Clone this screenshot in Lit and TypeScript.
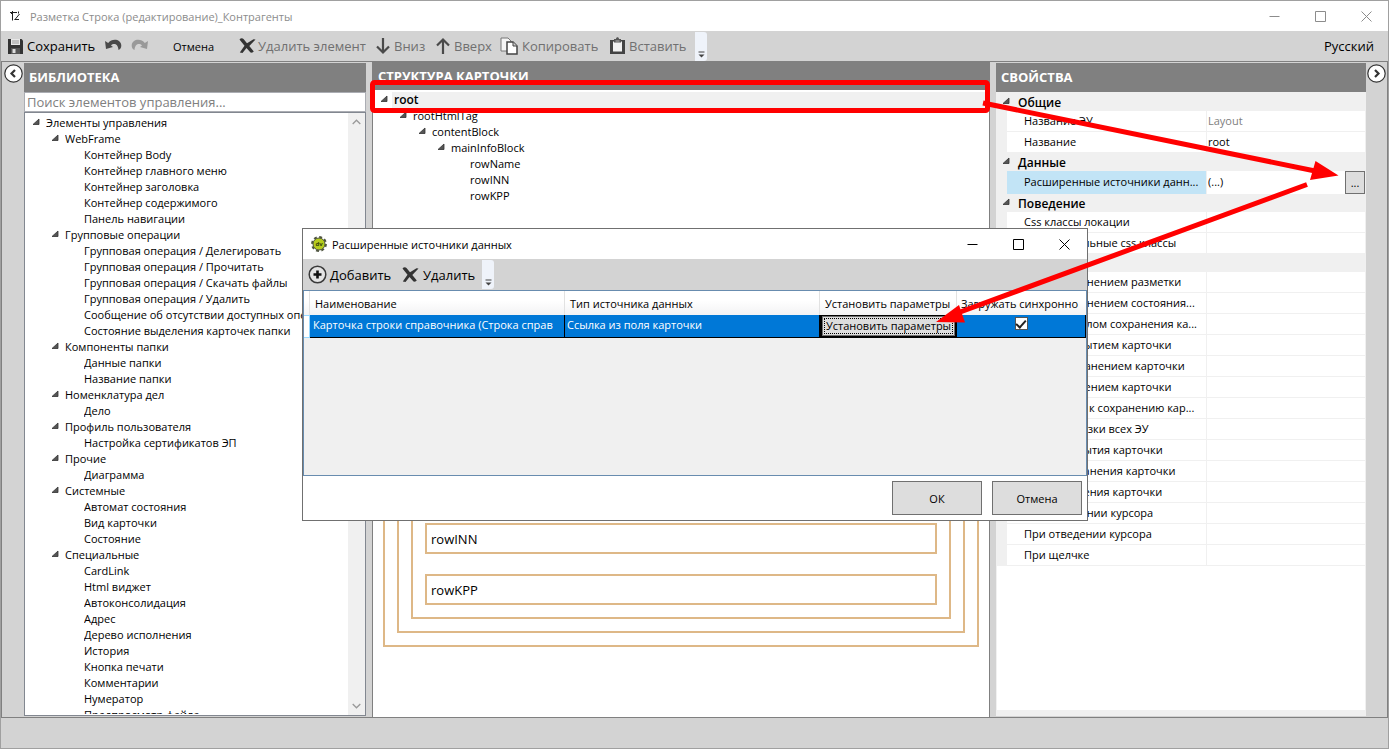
import { LitElement, html, css, svg } from "lit";
import { customElement, property, state } from "lit/decorators.js";
import { classMap } from "lit/directives/class-map.js";

type Node = { label: string; level: number; group?: boolean; root?: boolean };
type Prop = { name?: string; value?: string; category?: string; muted?: boolean; selected?: boolean };

const g = (level: number, label: string): Node => ({ label, level, group: true });
const l = (level: number, label: string): Node => ({ label, level });

const LIBRARY: Node[] = [
  g(0, "Элементы управления"),
  g(1, "WebFrame"),
  l(2, "Контейнер Body"),
  l(2, "Контейнер главного меню"),
  l(2, "Контейнер заголовка"),
  l(2, "Контейнер содержимого"),
  l(2, "Панель навигации"),
  g(1, "Групповые операции"),
  l(2, "Групповая операция / Делегировать"),
  l(2, "Групповая операция / Прочитать"),
  l(2, "Групповая операция / Скачать файлы"),
  l(2, "Групповая операция / Удалить"),
  l(2, "Сообщение об отсутствии доступных операций"),
  l(2, "Состояние выделения карточек папки"),
  g(1, "Компоненты папки"),
  l(2, "Данные папки"),
  l(2, "Название папки"),
  g(1, "Номенклатура дел"),
  l(2, "Дело"),
  g(1, "Профиль пользователя"),
  l(2, "Настройка сертификатов ЭП"),
  g(1, "Прочие"),
  l(2, "Диаграмма"),
  g(1, "Системные"),
  l(2, "Автомат состояния"),
  l(2, "Вид карточки"),
  l(2, "Состояние"),
  g(1, "Специальные"),
  l(2, "CardLink"),
  l(2, "Html виджет"),
  l(2, "Автоконсолидация"),
  l(2, "Адрес"),
  l(2, "Дерево исполнения"),
  l(2, "История"),
  l(2, "Кнопка печати"),
  l(2, "Комментарии"),
  l(2, "Нумератор"),
  l(2, "Предпросмотр файла"),
];

const STRUCTURE: Node[] = [
  { label: "root", level: 0, group: true, root: true },
  g(1, "rootHtmlTag"),
  g(2, "contentBlock"),
  g(3, "mainInfoBlock"),
  l(4, "rowName"),
  l(4, "rowINN"),
  l(4, "rowKPP"),
];

const PROPS: Prop[] = [
  { category: "Общие" },
  { name: "Название ЭУ", value: "Layout", muted: true },
  { name: "Название", value: "root" },
  { category: "Данные" },
  { name: "Расширенные источники данн...", value: "(...)", selected: true },
  { category: "Поведение" },
  { name: "Css классы локации" },
  { name: "Дополнительные css классы" },
  { category: "События" },
  { name: "Перед изменением разметки" },
  { name: "Перед изменением состояния..." },
  { name: "Перед началом сохранения ка..." },
  { name: "Перед закрытием карточки" },
  { name: "Перед сохранением карточки" },
  { name: "Перед удалением карточки" },
  { name: "Подготовка к сохранению кар..." },
  { name: "После загрузки всех ЭУ" },
  { name: "После открытия карточки" },
  { name: "После сохранения карточки" },
  { name: "После удаления карточки" },
  { name: "При наведении курсора" },
  { name: "При отведении курсора" },
  { name: "При щелчке" },
];

const icons = {
  app: svg`<svg width="12" height="12" viewBox="0 0 12 12" fill="none" stroke="#222" stroke-width="1">
    <path d="M0 2.500H7M2.500 1V10.500M4.500 9.500H9M5 9.500L9.500 4M1 4l1.500-1.500M8.500 1.500v2"/></svg>`,
  save: svg`<svg width="17" height="17" viewBox="0 0 17 17"><path d="M1 1h13.500l1.500 1.500V16H1z" fill="#333"/>
    <path d="M4 1h9v6H4z" fill="#e8e8e8"/><path d="M5 3h7M5 5h7" stroke="#999"/><path d="M4 10h9v6H4z" fill="#555"/><path d="M5.500 11h3v4h-3z" fill="#ddd"/></svg>`,
  undo: svg`<svg width="17" height="14" viewBox="0 0 17 14"><path d="M0 2l1 8 7-2-2-1.500C8.500 4 13 4.500 13.500 11c2-1 2.800-2.500 2.800-4.500C16 0 7 -1 3.200 4z" fill="#4a4a4a"/></svg>`,
  redo: svg`<svg width="17" height="14" viewBox="0 0 17 14"><path d="M17 2l-1 8-7-2 2-1.500C8.500 4 4 4.500 3.500 11c-2-1-2.800-2.500-2.800-4.500C1 0 10 -1 13.800 4z" fill="#999"/></svg>`,
  cross: svg`<svg width="18" height="18" viewBox="0 0 18 18"><path d="M0.500 2.500C1.500 1 3.500 .8 4.500 2L8 6.300 14.500 2.200l2 .4L10.300 9l4.500 5.500-1.800 1.300-1.500-.3L7.500 11 3.500 16 .8 15.500 5.500 8.700z" fill="#333"/></svg>`,
  down: svg`<svg width="16" height="18" viewBox="0 0 16 18" fill="none" stroke="#4a4a4a" stroke-width="2.200"><path d="M8 1v15M2 9.500l6 6 6-6"/></svg>`,
  up: svg`<svg width="16" height="18" viewBox="0 0 16 18" fill="none" stroke="#4a4a4a" stroke-width="2.200"><path d="M8 17V2M2 8.500l6-6 6 6"/></svg>`,
  copy: svg`<svg width="19" height="18" viewBox="0 0 19 18"><path d="M1 1h7l3 3v10H1z" fill="#f5f5f5" stroke="#777"/>
    <path d="M7 5h6l4 4v8H7z" fill="#fff" stroke="#444" stroke-width="1.500"/><path d="M13 5v4h4" fill="#ccc" stroke="#444"/></svg>`,
  paste: svg`<svg width="17" height="18" viewBox="0 0 17 18"><path d="M1 3h15v14H1z" fill="#444"/><path d="M4 4.500h9v10H4z" fill="#f2f2f2"/>
    <path d="M5 2h2c0-2.500 3-2.500 3 0h2v3.500H5z" fill="#555"/><path d="M6.500 4h4" stroke="#bbb"/></svg>`,
  plus: svg`<svg width="19" height="19" viewBox="0 0 19 19"><circle cx="9.500" cy="9.500" r="8.300" fill="#e4e4e4" stroke="#3a3a3a" stroke-width="1.500"/>
    <path d="M9.500 5.500v8M5.500 9.500h8" stroke="#111" stroke-width="2.600"/></svg>`,
  gear: svg`<svg width="16" height="16" viewBox="0 0 16 16"><circle cx="8" cy="8" r="6.800" fill="none" stroke="#4f5540" stroke-width="2.200" stroke-dasharray="2.900 2.440"/>
    <circle cx="8" cy="8" r="6" fill="#b6cc1e" stroke="#4f5540"/><text x="8" y="10" text-anchor="middle" font-size="6" font-weight="700" fill="#33400a" font-family="Open Sans, sans-serif">dv</text></svg>`,
  min: svg`<svg width="11" height="11" viewBox="0 0 11 11" fill="none" stroke="currentColor"><path d="M0.500 5.500h10"/></svg>`,
  max: svg`<svg width="11" height="11" viewBox="0 0 11 11" fill="none" stroke="currentColor"><path d="M0.500 0.500h10v10h-10z"/></svg>`,
  close: svg`<svg width="11" height="11" viewBox="0 0 11 11" fill="none" stroke="currentColor"><path d="M0.500 0.500l10 10M10.500 0.500l-10 10"/></svg>`,
  expander: svg`<svg width="8" height="8" viewBox="0 0 8 8"><path d="M7 1v5.500H1z" fill="#555" stroke="#333" stroke-width=".8"/></svg>`,
  left: svg`<svg width="19" height="19" viewBox="0 0 19 19" fill="none"><circle cx="9.500" cy="9.500" r="8.700" fill="#fff" stroke="#333" stroke-width="1.200"/><path d="M11 6l-3.500 3.500L11 13" stroke="#333" stroke-width="2.200"/></svg>`,
  right: svg`<svg width="19" height="19" viewBox="0 0 19 19" fill="none"><circle cx="9.500" cy="9.500" r="8.700" fill="#fff" stroke="#333" stroke-width="1.200"/><path d="M8 6l3.500 3.500L8 13" stroke="#333" stroke-width="2.200"/></svg>`,
  overflow: svg`<svg width="7" height="7" viewBox="0 0 7 7"><path d="M0.500 1h6" stroke="#444"/><path d="M0.500 3.500h6l-3 3z" fill="#444"/></svg>`,
  scrollUp: svg`<svg width="9" height="6" viewBox="0 0 9 6" fill="none" stroke="#999" stroke-width="1.300"><path d="M.7 5l3.800-3.800L8.300 5"/></svg>`,
  scrollDown: svg`<svg width="9" height="6" viewBox="0 0 9 6" fill="none" stroke="#999" stroke-width="1.300"><path d="M.7 1l3.800 3.800L8.300 1"/></svg>`,
};

const base = css`
  * { box-sizing: border-box; }
  svg { display: block; flex: none; }
  button, input { font: inherit; color: inherit; margin: 0; }
  .plain { display: flex; align-items: center; border: 0; padding: 0; background: none; white-space: nowrap; }
  .window-buttons { display: flex; gap: 35px; }
`;

@customElement("tree-view")
export class TreeView extends LitElement {
  @property({ attribute: false }) nodes: Node[] = [];

  static styles = [
    base,
    css`
      :host { display: block; }
      .tree { margin: 0; padding: 0; list-style: none; }
      .node { display: flex; height: 16px; line-height: 16px; white-space: nowrap; }
      .l1 { padding-left: 19px; }
      .l2 { padding-left: 38px; }
      .l3 { padding-left: 57px; }
      .l4 { padding-left: 76px; }
      .toggle { width: 14px; flex: none; padding-top: 3px; }
      .label { flex: 1; overflow: hidden; }
      .root .label { background: #f0f0f0; font-size: 12px; font-weight: 600; padding-left: 2px; margin-left: -2px; }
    `,
  ];

  render() {
    return html`<ul class="tree">
      ${this.nodes.map(
        (n) => html`<li class=${classMap({ node: true, ["l" + n.level]: true, root: !!n.root })}>
          <span class="toggle">${n.group ? icons.expander : ""}</span><span class="label">${n.label}</span>
        </li>`
      )}
    </ul>`;
  }
}

@customElement("property-grid")
export class PropertyGrid extends LitElement {
  static styles = [
    base,
    css`
      :host { display: block; flex: 1; background: #fff; border: solid #f0f0f0; border-width: 1px 1px 6px; }
      .category { display: flex; gap: 8px; height: 18px; padding: 1px 0 0 5px; background: #f0f0f0; font-size: 12px; font-weight: 600; line-height: 18px; }
      .category svg { margin-top: 3px; }
      .row { display: grid; grid-template-columns: 10px 200px 1fr; height: 21px; line-height: 19px; }
      .gutter { background: #f0f0f0; }
      .name { padding-left: 17px; border: solid #f0f0f0; border-width: 0 1px 1px 0; white-space: nowrap; overflow: hidden; }
      .value { display: flex; justify-content: space-between; padding-left: 1px; border-bottom: 1px solid #f0f0f0; }
      .muted { color: #808080; }
      .selected { height: 23px; line-height: 22px; }
      .selected .name { background: #c2e4f6; }
      .more { width: 20px; height: 23px; padding: 0; border: 1px solid #707070; background: #ddd; }
    `,
  ];

  render() {
    return html`${PROPS.map((p) =>
      p.category
        ? html`<div class="category">${icons.expander}<span>${p.category}</span></div>`
        : html`<div class=${classMap({ row: true, selected: !!p.selected })}>
            <span class="gutter"></span><span class="name">${p.name}</span>
            <span class=${classMap({ value: true, muted: !!p.muted })}
              ><span>${p.value ?? ""}</span>${p.selected ? html`<button class="more">...</button>` : ""}</span
            >
          </div>`
    )}`;
  }
}

@customElement("sources-dialog")
export class SourcesDialog extends LitElement {
  @state() sync = true;

  static styles = [
    base,
    css`
      :host { display: flex; flex-direction: column; background: #fff; border: 1px solid #707070; }
      .title { display: flex; align-items: center; justify-content: space-between; height: 30px; padding: 0 17px 0 8px; }
      .caption { display: flex; align-items: center; gap: 5px; }
      .toolbar { display: grid; grid-template-columns: 94px 80px 12px; height: 31px; padding-left: 5px; background: #d3d3d3; font-size: 13px; }
      .toolbar .plain { gap: 3px; }
      .overflow { display: flex; align-items: flex-end; justify-content: center; margin: 1px 0; padding-bottom: 3px; background: #eff3fa; border-radius: 0 3px 3px 0; }
      .body { flex: 1; border: 1px solid #688caf; background: #f0f0f0; }
      table { width: 100%; table-layout: fixed; border-collapse: separate; border-spacing: 0; }
      .c0 { width: 6px; }
      .c1, .c2 { width: 255px; }
      .c3 { width: 137px; }
      th { height: 24px; padding: 1px 0 0 5px; border-right: 1px solid #e2e2e2; background: linear-gradient(#fff 0 40%, #f3f3f4); font-weight: 400; text-align: left; white-space: nowrap; }
      th:last-child { padding-left: 4px; border: 0; }
      td { height: 23px; padding: 0 3px 2px; overflow: hidden; white-space: nowrap; background: #0078d7; color: #fff; border: solid #000; border-width: 0 1px 1px 0; line-height: 16px; }
      td + td + td { padding-left: 2px; }
      td:first-child { background: #fff; border: 1px solid #99d9ff; border-left: 0; }
      td.action { padding: 0; border: 2px solid #000; border-top-width: 1px; }
      .set { display: block; width: 100%; height: 20px; padding: 0; border: 1px solid #707070; background: #ddd; color: #000; white-space: nowrap; line-height: 16px; outline: 1px dotted #000; outline-offset: -3px; }
      td.check { padding: 0; }
      .box { appearance: none; display: grid; place-items: center; width: 13px; height: 13px; margin: 0 auto 5px; border: 1px solid #555; background: #fff; }
      .box:checked::after { content: ""; width: 4px; height: 8px; margin-bottom: 2px; border: solid #222; border-width: 0 2px 2px 0; transform: rotate(42deg); }
      .footer { display: flex; justify-content: flex-end; gap: 10px; padding: 5px; }
      .btn { width: 90px; height: 34px; border: 1px solid #707070; background: #ddd; }
    `,
  ];

  render() {
    return html`
      <div class="title">
        <span class="caption">${icons.gear}<span>Расширенные источники данных</span></span>
        <span class="window-buttons">
          <button class="plain" aria-label="Свернуть">${icons.min}</button>
          <button class="plain" aria-label="Развернуть">${icons.max}</button>
          <button class="plain" aria-label="Закрыть">${icons.close}</button>
        </span>
      </div>
      <div class="toolbar">
        <button class="plain">${icons.plus}Добавить</button>
        <button class="plain">${icons.cross}Удалить</button>
        <span class="overflow">${icons.overflow}</span>
      </div>
      <div class="body">
        <table>
          <colgroup><col class="c0" /><col class="c1" /><col class="c2" /><col class="c3" /><col /></colgroup>
          <thead>
            <tr><th></th><th>Наименование</th><th>Тип источника данных</th><th>Установить параметры</th><th>Загружать синхронно</th></tr>
          </thead>
          <tbody>
            <tr>
              <td></td>
              <td>Карточка строки справочника (Строка справ</td>
              <td>Ссылка из поля карточки</td>
              <td class="action"><button class="set">Установить параметры</button></td>
              <td class="check"><input class="box" type="checkbox" aria-label="Загружать синхронно" .checked=${this.sync} /></td>
            </tr>
          </tbody>
        </table>
      </div>
      <div class="footer">
        <button class="btn">ОК</button>
        <button class="btn">Отмена</button>
      </div>
    `;
  }
}

@customElement("app-root")
export class AppRoot extends LitElement {
  static styles = [
    base,
    css`
      :host { position: relative; display: flex; flex-direction: column; height: 100vh; overflow: hidden; box-sizing: border-box; border: 1px solid #a0a0a0; background: #d3d3d3; color: #000; font: 11px "Open Sans", "Noto Sans", sans-serif; }
      .title { display: flex; align-items: center; justify-content: space-between; height: 30px; padding: 0 16px 0 9px; background: #fff; color: #8c8c8c; }
      .caption { display: flex; align-items: center; gap: 8px; }
      .toolbar { display: flex; justify-content: space-between; height: 30px; padding: 0 14px 0 6px; font-size: 13px; }
      .tools { display: grid; grid-template-columns: 98px 26px 42px 66px 136px 60px 65px 109px 86px 12px; }
      .tools .plain { gap: 3px; }
      .tools .small { font-size: 11px; }
      .tools .tight { gap: 1px; }
      .off { color: #707070; }
      .overflow { display: flex; align-items: flex-end; justify-content: center; margin-top: 1px; padding-bottom: 3px; background: #eff3fa; border-radius: 0 3px 3px 0; }
      .main { flex: 1; min-height: 0; display: grid; grid-template-columns: 23px 342px 6px 1fr 6px 370px 22px; border: solid #808080; border-width: 1px 0; }
      .strip { display: flex; justify-content: center; align-items: flex-start; padding-top: 2px; border-left: 1px solid #808080; }
      .strip.end { border-left: 0; border-right: 1px solid #808080; }
      .panel { display: flex; flex-direction: column; min-height: 0; min-width: 0; overflow: hidden; padding: 1px 0; }
      .heading { flex: none; height: 29px; margin: 0; padding-left: 5px; background: #808080; color: #fff; font-size: 13px; font-weight: 700; line-height: 29px; }
      .search { height: 20px; flex: none; padding: 0 2px; border: 1px solid #abadb3; background: #fff; font-size: 13px; border-radius: 0; }
      .search::placeholder { color: #808080; opacity: 1; }
      .list { flex: 1; min-height: 0; display: flex; border: 1px solid #828790; background: #fff; }
      .list tree-view { flex: 1; min-width: 0; overflow: hidden; padding: 2px 0 0 7px; margin-bottom: 1px; }
      .scroll { display: flex; flex-direction: column; justify-content: space-between; align-items: center; width: 17px; padding: 6px 0; background: #f0f0f0; }
      .center { background: #fff; border: solid #808080; border-width: 0 1px; padding: 0; }
      .center .heading { height: 28px; line-height: 28px; }
      .outline { flex: none; min-height: 340px; padding: 2px 0 0 7px; }
      .preview { margin: 0 10px; }
      .box { padding: 12px; border: 2px solid #deb887; }
      .fields { display: flex; flex-direction: column; gap: 20px; }
      .field { height: 31px; padding-left: 4px; border: 2px solid #deb887; font-size: 13px; line-height: 28px; }
      .status { height: 30px; }
      .dialog { position: absolute; left: 301px; top: 227px; width: 786px; height: 293px; }
      .marks { position: absolute; left: -1px; top: -1px; pointer-events: none; }
    `,
  ];

  render() {
    return html`
      <header class="title">
        <span class="caption">${icons.app}<span>Разметка Строка (редактирование)_Контрагенты</span></span>
        <span class="window-buttons">
          <button class="plain" aria-label="Свернуть">${icons.min}</button>
          <button class="plain" aria-label="Развернуть">${icons.max}</button>
          <button class="plain" aria-label="Закрыть">${icons.close}</button>
        </span>
      </header>
      <div class="toolbar">
        <div class="tools">
          <button class="plain">${icons.save}Сохранить</button>
          <button class="plain" aria-label="Отменить действие">${icons.undo}</button>
          <button class="plain" aria-label="Повторить действие">${icons.redo}</button>
          <button class="plain small">Отмена</button>
          <button class="plain tight off">${icons.cross}Удалить элемент</button>
          <button class="plain off">${icons.down}Вниз</button>
          <button class="plain off">${icons.up}Вверх</button>
          <button class="plain off">${icons.copy}Копировать</button>
          <button class="plain off">${icons.paste}Вставить</button>
          <span class="overflow">${icons.overflow}</span>
        </div>
        <button class="plain">Русский</button>
      </div>
      <main class="main">
        <div class="strip"><button class="plain" aria-label="Скрыть библиотеку">${icons.left}</button></div>
        <section class="panel">
          <h2 class="heading">БИБЛИОТЕКА</h2>
          <input class="search" aria-label="Поиск" placeholder="Поиск элементов управления..." />
          <div class="list">
            <tree-view .nodes=${LIBRARY}></tree-view>
            <div class="scroll">${icons.scrollUp}${icons.scrollDown}</div>
          </div>
        </section>
        <span></span>
        <section class="panel center">
          <h2 class="heading">СТРУКТУРА КАРТОЧКИ</h2>
          <tree-view class="outline" .nodes=${STRUCTURE}></tree-view>
          <div class="preview box"><div class="box"><div class="box fields">
            <div class="field">rowName</div>
            <div class="field">rowINN</div>
            <div class="field">rowKPP</div>
          </div></div></div>
        </section>
        <span></span>
        <section class="panel">
          <h2 class="heading">СВОЙСТВА</h2>
          <property-grid></property-grid>
        </section>
        <div class="strip end"><button class="plain" aria-label="Скрыть свойства">${icons.right}</button></div>
      </main>
      <footer class="status"></footer>
      <sources-dialog class="dialog"></sources-dialog>
      <svg class="marks" width="1389" height="749" viewBox="0 0 1389 749" fill="none" stroke="#f00" stroke-width="5">
        <rect x="372.500" y="82.500" width="615" height="28" rx="2" />
        <path d="M983 103L1320 172M1307 184.500L952 315" />
        <path d="M1338.500 175.500L1315.500 161L1310 180zM936 322L959 305L965 322.500z" fill="#f00" stroke="none" />
      </svg>
    `;
  }
}
